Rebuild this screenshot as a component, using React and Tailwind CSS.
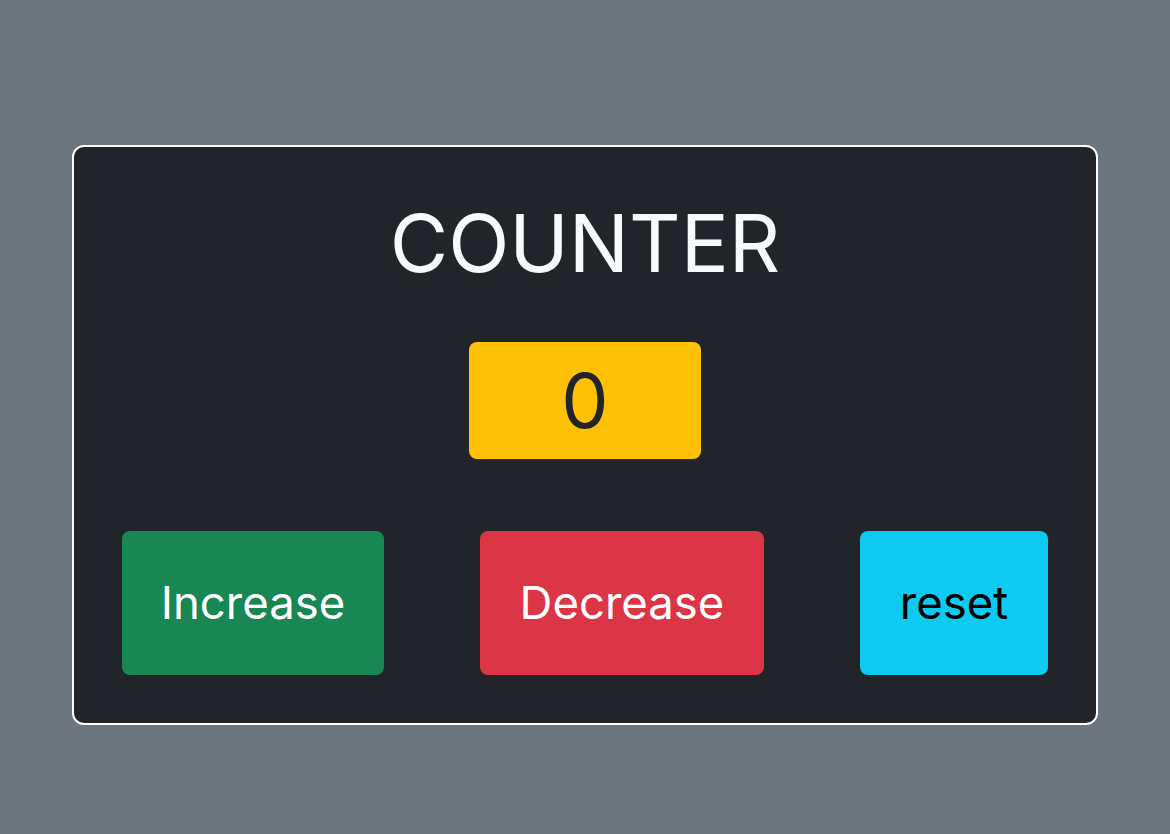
import { useState } from 'react';

const App = () => {
  const [count, setCount] = useState(0);

  return (
    <div className="min-h-[834px] bg-[#6c757d] pt-[145px] px-[72px] font-['Inter','Liberation_Sans',sans-serif]">
      <div className="bg-[#212529] border-2 border-white rounded-xl px-12 pt-[48px] pb-[48px] flex flex-col items-center">
        <h1 className="text-[80px] leading-[96px] text-[#f8f9fa] font-normal">COUNTER</h1>

        <div className="mt-[51px] w-[232px] h-[117px] rounded-lg bg-[#ffc107] flex items-center justify-center">
          <span className="text-[75px] leading-none text-[#212529]">{count}</span>
        </div>

        <div className="mt-[72px] w-full flex justify-between">
          <button
            onClick={() => setCount(count + 1)}
            className="w-[262px] h-[144px] rounded-lg bg-[#198754] text-white text-[45.5px]"
          >
            Increase
          </button>
          <button
            onClick={() => setCount(count - 1)}
            className="w-[284px] h-[144px] rounded-lg bg-[#dc3545] text-white text-[45.5px]"
          >
            Decrease
          </button>
          <button
            onClick={() => setCount(0)}
            className="w-[188px] h-[144px] rounded-lg bg-[#0dcaf0] text-black text-[45.5px]"
          >
            reset
          </button>
        </div>
      </div>
    </div>
  );
};

export default App;
